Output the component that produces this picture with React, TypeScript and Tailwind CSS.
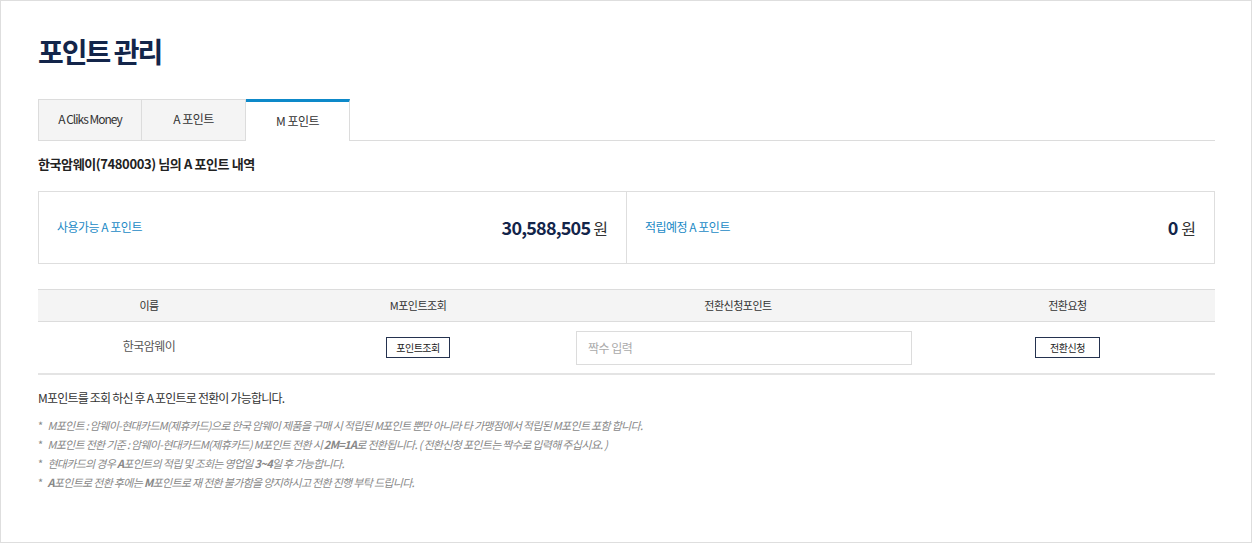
import React from "react";

const font = { fontFamily: '"Noto Sans CJK KR", "Noto Sans", sans-serif' };

export default function App() {
  return (
    <div style={font} className="w-[1253px] h-[544px] bg-white">
      <div className="w-[1252px] h-[543px] border border-[#dedede] bg-white pl-[37px] pr-[36px]">
        <h1 className="mt-[30px] text-[28px] leading-[40px] font-bold text-[#13254a] tracking-[-2px]">
          포인트 관리
        </h1>

        {/* Tabs */}
        <div className="mt-[28px] flex h-[42px] border-b border-[#dcdcdc]">
          <div className="w-[104px] h-[41px] bg-[#f4f4f4] border border-[#dcdcdc] border-b-0 flex items-center justify-center text-[12px] text-[#333] tracking-[-1px]">
            <span className="-mt-[2px]">A Cliks Money</span>
          </div>
          <div className="w-[104px] h-[41px] bg-[#f4f4f4] border border-l-0 border-[#dcdcdc] border-b-0 flex items-center justify-center text-[12px] text-[#333] tracking-[-0.5px]">
            <span className="-mt-[2px]">A 포인트</span>
          </div>
          <div className="w-[104px] h-[42px] bg-white border-t-[3px] border-t-[#0d89c9] border-r border-r-[#dcdcdc] flex items-center justify-center text-[12px] text-[#333] tracking-[-0.5px]">
            <span className="-mt-[2px]">M 포인트</span>
          </div>
        </div>

        <div className="mt-[13px] text-[13px] leading-[20px] font-bold text-[#222] tracking-[-0.4px]">
          한국암웨이(7480003) 님의 A 포인트 내역
        </div>

        {/* Summary */}
        <div className="mt-[17px] flex h-[73px] border border-[#dedede]">
          <div className="flex-1 flex items-center justify-between pl-[18px] pr-[18px] border-r border-[#dedede]">
            <span className="text-[12px] text-[#1b8ac6] tracking-[-0.5px] -mt-[2px]">사용가능 A 포인트</span>
            <span className="flex items-baseline gap-[3px] text-[#13254a]">
              <span className="text-[18px] font-bold tracking-[-0.8px]">30,588,505</span>
              <span className="text-[16px] text-[#333]">원</span>
            </span>
          </div>
          <div className="flex-1 flex items-center justify-between pl-[18px] pr-[18px]">
            <span className="text-[12px] text-[#1b8ac6] tracking-[-0.5px] -mt-[2px]">적립예정 A 포인트</span>
            <span className="flex items-baseline gap-[3px] text-[#13254a]">
              <span className="text-[18px] font-bold">0</span>
              <span className="text-[16px] text-[#333]">원</span>
            </span>
          </div>
        </div>

        {/* Table */}
        <div className="mt-[25px] border-t border-[#dcdcdc] border-b-2 border-b-[#e4e4e4]">
          <div className="grid grid-cols-[222px_316px_344px_1fr] h-[32px] bg-[#f4f4f4] border-b border-[#dcdcdc] text-[11px] text-[#333] tracking-[-0.5px]">
            <div className="flex items-center justify-center">이름</div>
            <div className="flex items-center justify-center">M포인트조회</div>
            <div className="flex items-center justify-center pr-[20px]">전환신청포인트</div>
            <div className="flex items-center justify-center">전환요청</div>
          </div>
          <div className="grid grid-cols-[222px_316px_344px_1fr] h-[51px] items-center">
            <div className="flex items-center justify-center text-[12px] text-[#555] tracking-[-0.5px] -mt-[4px]">한국암웨이</div>
            <div className="flex items-center justify-center">
              <button className="w-[64px] h-[21px] border border-[#24324f] bg-white text-[10px] text-[#222] tracking-[-0.5px] flex items-center justify-center">
                포인트조회
              </button>
            </div>
            <div className="flex items-center">
              <input
                className="w-[336px] h-[34px] border border-[#dcdcdc] px-[11px] text-[12px] placeholder-[#aaa] outline-none tracking-[-0.5px]"
                placeholder="짝수 입력"
              />
            </div>
            <div className="flex items-center justify-center">
              <button className="w-[65px] h-[21px] border border-[#24324f] bg-white text-[10px] text-[#222] tracking-[-0.5px] flex items-center justify-center">
                전환신청
              </button>
            </div>
          </div>
        </div>

        <div className="mt-[14px] text-[12px] leading-[18px] text-[#333] tracking-[-0.8px]">
          M포인트를 조회 하신 후 A 포인트로 전환이 가능합니다.
        </div>

        <ul className="mt-[9px] text-[11px] leading-[19px] text-[#888] italic tracking-[-0.7px]">
          <li className="flex gap-[5px]">
            <span className="not-italic">*</span>
            <span>M포인트 : 암웨이-현대카드M(제휴카드)으로 한국 암웨이 제품을 구매 시 적립된 M포인트 뿐만 아니라 타 가맹점에서 적립된 M포인트 포함 합니다.</span>
          </li>
          <li className="flex gap-[5px]">
            <span className="not-italic">*</span>
            <span>
              M포인트 전환 기준 : 암웨이-현대카드M(제휴카드) M포인트 전환 시 <b className="font-bold">2M=1A</b>로 전환됩니다. ( 전환신청 포인트는 짝수로 입력해 주십시요. )
            </span>
          </li>
          <li className="flex gap-[5px]">
            <span className="not-italic">*</span>
            <span>
              현대카드의 경우 <b className="font-bold">A</b>포인트의 적립 및 조회는 영업일 <b className="font-bold">3~4</b>일 후 가능합니다.
            </span>
          </li>
          <li className="flex gap-[5px]">
            <span className="not-italic">*</span>
            <span>
              <b className="font-bold">A</b>포인트로 전환 후에는 <b className="font-bold">M</b>포인트로 재 전환 불가함을 양지하시고 전환 진행 부탁 드립니다.
            </span>
          </li>
        </ul>
      </div>
    </div>
  );
}
